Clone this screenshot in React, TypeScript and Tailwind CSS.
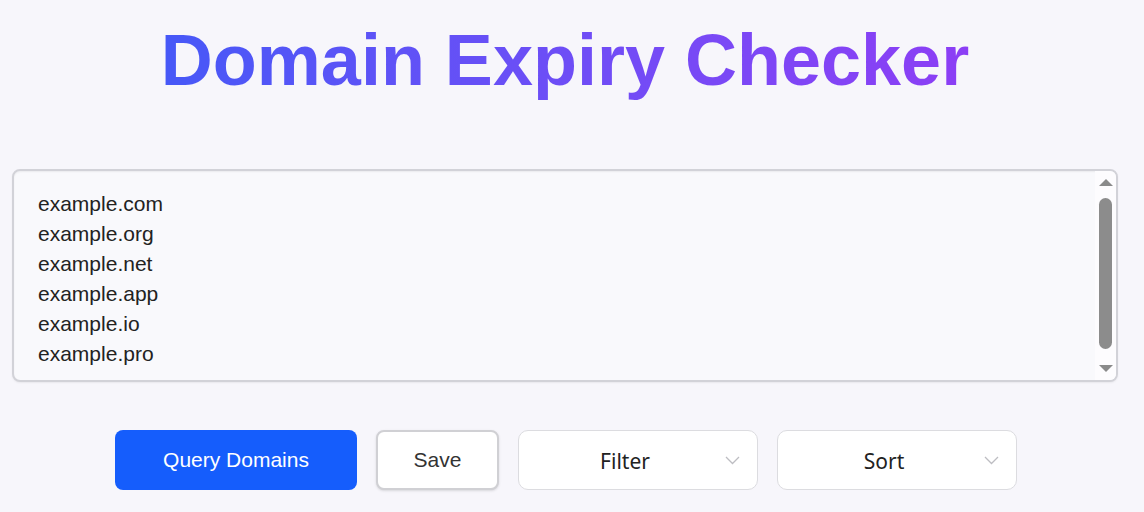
import React from 'react';

const domains = ['example.com', 'example.org', 'example.net', 'example.app', 'example.io', 'example.pro'];

const Chevron: React.FC = () => (
  <svg width="15" height="9" viewBox="0 0 15 9" fill="none" className="shrink-0">
    <path d="M1 1l6.5 6.5L14 1" stroke="#bdbdc2" strokeWidth="1.3" />
  </svg>
);

const Select: React.FC<{ label: string }> = ({ label }) => (
  <div className="flex h-[60px] w-[240px] items-center rounded-[10px] border border-[#dcdce0] bg-white pl-[6px] pr-[17px]">
    <span className="flex-1 pt-[4px] text-center text-[21px] text-[#222]" style={{ fontFamily: '"Noto Sans", "Open Sans", sans-serif' }}>
      {label}
    </span>
    <Chevron />
  </div>
);

export default function App() {
  return (
    <div
      className="min-h-[512px] w-full bg-[#f7f6fb] pl-[12px] pr-[26px] pt-[24px]"
      style={{ fontFamily: '"Liberation Sans", Arial, sans-serif' }}
    >
      <h1 className="text-center text-[72px] font-bold leading-none">
        <span className="bg-gradient-to-r from-[#4658f7] to-[#8c3ef5] bg-clip-text text-transparent">
          Domain Expiry Checker
        </span>
      </h1>

      {/* domain list box */}
      <div className="mt-[73px] flex h-[213px] overflow-hidden rounded-lg border-2 border-[#d2d2d8] bg-[#f9f9fc] shadow-[inset_0_1px_2px_rgba(0,0,0,0.06),0_1px_2px_rgba(0,0,0,0.06)]">
        <div className="flex-1 pl-[24px] pt-[18px] text-[21px] leading-[30px] text-[#222]">
          {domains.map((d) => (
            <div key={d}>{d}</div>
          ))}
        </div>
        <div className="flex w-[21px] flex-col items-center bg-[#fdfcfe] pt-[8px]">
          <svg width="14" height="7" viewBox="0 0 14 7">
            <path d="M7 0L14 7H0z" fill="#8a8a8a" />
          </svg>
          <div className="mt-[12px] h-[151px] w-[13px] rounded-full bg-[#8c8c8c]" />
          <svg width="14" height="7" viewBox="0 0 14 7" className="mt-[16px]">
            <path d="M0 0H14L7 7z" fill="#8a8a8a" />
          </svg>
        </div>
      </div>

      <div className="mt-[48px] flex items-center gap-[19px] pl-[103px]">
        <button className="h-[60px] w-[242px] rounded-lg bg-[#155dfc] text-[21px] text-white">
          Query Domains
        </button>
        <button className="h-[60px] w-[123px] rounded-lg border-2 border-[#d0d0d4] bg-white text-[21px] text-[#333] shadow-sm">
          Save
        </button>
        <Select label="Filter" />
        <Select label="Sort" />
      </div>
    </div>
  );
}
